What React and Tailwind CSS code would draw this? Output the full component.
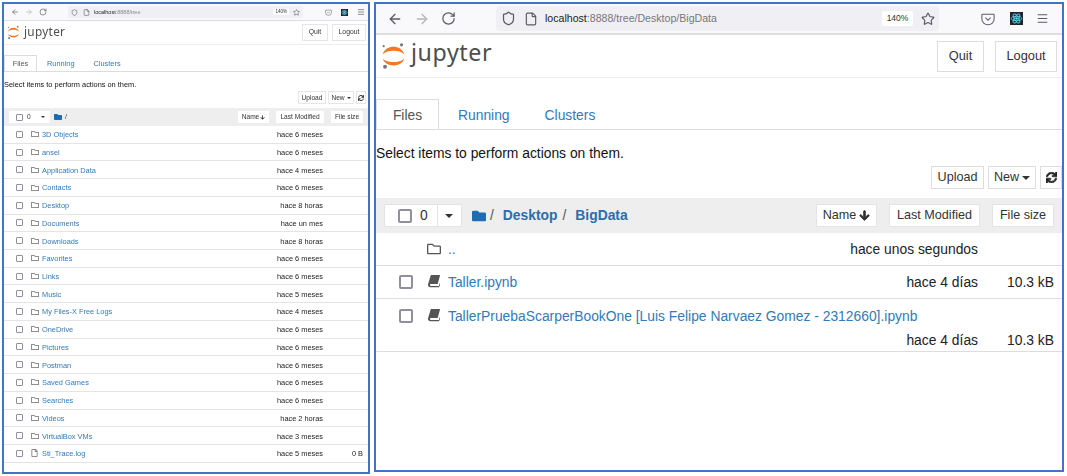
import React from 'react';
import { ArrowLeft, ArrowRight, RotateCw, Shield, File, Star, Menu } from 'lucide-react';
import { FaFolder, FaRegFolder, FaRegFile, FaArrowDown, FaSync } from 'react-icons/fa';

const LEFT_ROWS = [
  ['3D Objects', 'hace 6 meses'],
  ['ansel', 'hace 6 meses'],
  ['Application Data', 'hace 4 meses'],
  ['Contacts', 'hace 6 meses'],
  ['Desktop', 'hace 8 horas'],
  ['Documents', 'hace un mes'],
  ['Downloads', 'hace 8 horas'],
  ['Favorites', 'hace 6 meses'],
  ['Links', 'hace 6 meses'],
  ['Music', 'hace 5 meses'],
  ['My Files-X Free Logs', 'hace 4 meses'],
  ['OneDrive', 'hace 6 meses'],
  ['Pictures', 'hace 6 meses'],
  ['Postman', 'hace 6 meses'],
  ['Saved Games', 'hace 6 meses'],
  ['Searches', 'hace 6 meses'],
  ['Videos', 'hace 2 horas'],
  ['VirtualBox VMs', 'hace 3 meses'],
  ['Sti_Trace.log', 'hace 5 meses', '0 B', 'file'],
];

function JupyterLogo({ className }) {
  return (
    <svg viewBox="0 0 28 30" className={className}>
      <path d="M2 13 C5 2 23 2 26 13 C21 8 7 8 2 13 Z" fill="#f37726" />
      <path d="M2 18 C5 28 23 28 26 18 C21 23 7 23 2 18 Z" fill="#f37726" />
      <circle cx="23" cy="2.5" r="1.8" fill="#767677" />
      <circle cx="3" cy="4" r="1.2" fill="#767677" />
      <circle cx="4.5" cy="27" r="2.2" fill="#767677" />
    </svg>
  );
}

function PocketIcon({ className }) {
  return (
    <svg viewBox="0 0 16 16" fill="none" stroke="#5b5b66" strokeWidth="1.2" className={className}>
      <path d="M2 2.5 H14 Q15 2.5 15 3.5 V8 A7 6.5 0 0 1 1 8 V3.5 Q1 2.5 2 2.5 Z" />
      <path d="M5 6.5 L8 9.5 L11 6.5" />
    </svg>
  );
}

function ReactExt({ className }) {
  return (
    <svg viewBox="0 0 16 16" className={className}>
      <rect width="16" height="16" fill="#20232a" />
      <g fill="none" stroke="#61dafb" strokeWidth="1">
        <ellipse cx="8" cy="8" rx="6.5" ry="2.6" />
        <ellipse cx="8" cy="8" rx="6.5" ry="2.6" transform="rotate(60 8 8)" />
        <ellipse cx="8" cy="8" rx="6.5" ry="2.6" transform="rotate(120 8 8)" />
      </g>
      <circle cx="8" cy="8" r="1.5" fill="#61dafb" />
    </svg>
  );
}

// slanted notebook icon, the fa-book that Jupyter uses
function BookIcon({ className }) {
  return (
    <svg viewBox="0 0 16 16" fill="currentColor" className={className}>
      <path d="M5 1H15L12.2 11.5H4.4C3 11.5 3 13.6 4.4 13.6H13.6L14.8 9.5V13L13.6 15H3.5C1.5 15 .8 13 1.3 11.5L4 2.2C4.2 1.5 4.5 1 5 1Z" />
    </svg>
  );
}

function Caret({ className }) {
  return <span className={`border-x-transparent border-t-current ${className}`} />;
}

function LeftRow({ name, time, size, kind }) {
  return (
    <div className="flex h-[17.73px] items-center border-b border-[#e4e4e4] text-[7.4px]">
      <span className="ml-[12px] h-[7px] w-[7px] rounded-[1px] border border-[#8f8f9d]" />
      <span className="ml-[8px] flex w-[11px] text-[#6b6b6b]">
        {kind === 'file' ? <FaRegFile className="h-[8px] w-[7px]" /> : <FaRegFolder className="h-[8px] w-[8px]" />}
      </span>
      <span className="pt-[1px] text-[#337ab7]">{name}</span>
      <span className="ml-auto pt-[1px] text-[#222]">{time}</span>
      <span className="w-[45px] pr-[5px] pt-[1px] text-right text-[#222]">{size}</span>
    </div>
  );
}

function LeftPanel() {
  return (
    <section className="flex h-[472px] w-[368px] flex-col overflow-hidden border-2 border-[#4472c4] bg-white blur-[0.45px]">
      <div className="flex h-[17px] shrink-0 items-center border-b border-[#ddd] bg-[#f9f9fb] text-[#5b5b66]">
        <ArrowLeft className="ml-[7px] h-[8px] w-[8px]" />
        <ArrowRight className="ml-[6px] h-[8px] w-[8px] text-[#b5b5bb]" />
        <RotateCw className="ml-[6px] h-[8px] w-[8px]" />
        <div className="ml-[21px] flex h-[12px] w-[235px] items-center rounded-[2px] bg-[#f0f0f4] pl-[3px]">
          <Shield className="h-[7px] w-[7px]" />
          <File className="ml-[5px] h-[7px] w-[7px]" />
          <span className="ml-[4px] text-[5.5px] text-[#222]">localhost<span className="text-[#888]">:8888/tree</span></span>
          <span className="ml-auto mr-[4px] bg-white px-[2px] text-[4.5px] text-[#333]">140%</span>
          <Star className="mr-[3px] h-[7px] w-[7px]" />
        </div>
        <PocketIcon className="ml-[22px] h-[7px] w-[7px]" />
        <ReactExt className="ml-[9px] h-[7px] w-[7px]" />
        <Menu className="ml-[9px] h-[8px] w-[8px]" />
      </div>
      <header className="flex h-[24px] shrink-0 items-center border-b border-[#eee] pl-[3px] pr-[2px]">
        <JupyterLogo className="h-[15px] w-[13px]" />
        <span className="ml-[4px] pb-[2px] font-['Noto_Sans',sans-serif] text-[11.8px] leading-none tracking-[0.3px] text-[#4e4e4e]">jupyter</span>
        <button className="ml-auto flex h-[17px] w-[26px] items-center justify-center border border-[#e6e6e6] text-[6.8px] text-[#333]">Quit</button>
        <button className="ml-[4px] flex h-[17px] w-[34px] items-center justify-center border border-[#e6e6e6] text-[6.8px] text-[#333]">Logout</button>
      </header>
      <nav className="mt-[10px] flex h-[17px] shrink-0 border-b border-[#ddd] text-[7.4px]">
        <span className="flex w-[33px] items-center justify-center border border-b-0 border-[#ddd] pt-[1px] text-[#555]">Files</span>
        <span className="ml-[10px] flex items-center pt-[1px] text-[#337ab7]">Running</span>
        <span className="ml-[19px] flex items-center pt-[1px] text-[#337ab7]">Clusters</span>
      </nav>
      <p className="mt-[8px] h-[10px] shrink-0 text-[7.4px] leading-[10px] text-[#111]">Select items to perform actions on them.</p>
      <div className="mt-[1px] flex h-[13px] shrink-0 items-center justify-end gap-[2px] pr-[2px] text-[6.6px] text-[#333]">
        <button className="flex h-[13px] w-[28px] items-center justify-center border border-[#e6e6e6]">Upload</button>
        <button className="flex h-[13px] w-[26px] items-center justify-center gap-[2px] border border-[#e6e6e6]">New <Caret className="border-x-[2px] border-t-[2px]" /></button>
        <button className="flex h-[13px] w-[10px] items-center justify-center border border-[#e6e6e6]"><FaSync className="h-[6px] w-[6px]" /></button>
      </div>
      <div className="mt-[4px] flex h-[18px] shrink-0 items-center bg-[#eee] text-[6.6px] text-[#333]">
        <div className="ml-[5px] flex h-[12px] w-[41px] items-center bg-white">
          <span className="ml-[7px] h-[7px] w-[7px] rounded-[1px] border border-[#8f8f9d]" />
          <span className="ml-[4px]">0</span>
          <Caret className="ml-auto mr-[5px] border-x-[2px] border-t-[2px]" />
        </div>
        <FaFolder className="ml-[4px] h-[8px] w-[8px] text-[#1f6db0]" />
        <span className="ml-[3px]">/</span>
        <button className="ml-auto flex h-[12px] w-[31px] items-center justify-center gap-[1px] bg-white">Name <FaArrowDown className="h-[5px] w-[5px]" /></button>
        <button className="ml-[7px] flex h-[12px] w-[48px] items-center justify-center bg-white">Last Modified</button>
        <button className="ml-[7px] mr-[5px] flex h-[12px] w-[32px] items-center justify-center bg-white">File size</button>
      </div>
      {LEFT_ROWS.map(([name, time, size, kind]) => (
        <LeftRow key={name} name={name} time={time} size={size} kind={kind} />
      ))}
    </section>
  );
}

function RightRow({ name, time, size, kind }) {
  return (
    <div className="flex h-[33px] items-center border-b border-[#ddd] text-[13.85px]">
      {kind === 'up' ? (
        <span className="w-[51px]" />
      ) : (
        <span className="ml-[23px] mr-[14px] h-[14px] w-[14px] rounded-[2px] border-2 border-[#8f8f9d]" />
      )}
      <span className="flex w-[21px] text-[#555]">
        {kind === 'up' ? <FaRegFolder className="h-[14px] w-[14px]" /> : <BookIcon className="-mt-[2px] h-[14px] w-[14px]" />}
      </span>
      <span className="pt-[1px] text-[#337ab7]">{name}</span>
      <span className="ml-auto text-[#222]">{time}</span>
      <span className="w-[84px] pr-[8px] text-right text-[#222]">{size}</span>
    </div>
  );
}

function RightPanel() {
  return (
    <section className="flex h-[470px] w-[690px] flex-col overflow-hidden border-2 border-[#4472c4] bg-white">
      <div className="flex h-[31px] shrink-0 items-center border-b-2 border-[#ddd] bg-[#f9f9fb] text-[#5b5b66]">
        <ArrowLeft className="ml-[11px] h-[16px] w-[16px]" />
        <ArrowRight className="ml-[11px] h-[16px] w-[16px] text-[#b5b5bb]" />
        <RotateCw className="ml-[11px] h-[15px] w-[15px]" />
        <div className="ml-[40px] flex h-[25px] w-[443px] items-center rounded-[4px] bg-[#f0f0f4] pl-[5px]">
          <Shield className="h-[15px] w-[15px]" />
          <File className="ml-[8px] h-[14px] w-[14px]" />
          <span className="ml-[7px] text-[10.6px] text-[#222]">localhost<span className="text-[#777]">:8888/tree/Desktop/BigData</span></span>
          <span className="ml-auto mr-[8px] flex h-[15px] w-[31px] items-center justify-center rounded-[2px] bg-white text-[8.5px] text-[#333]">140%</span>
          <Star className="mr-[4px] h-[14px] w-[14px]" />
        </div>
        <PocketIcon className="ml-[42px] h-[14px] w-[14px]" />
        <ReactExt className="ml-[15px] h-[13px] w-[13px]" />
        <Menu className="ml-[13px] h-[13px] w-[13px]" />
      </div>
      <header className="flex h-[43px] shrink-0 items-center border-b border-[#eee] pl-[5px] pr-[5px]">
        <JupyterLogo className="h-[30px] w-[25px]" />
        <span className="ml-[5px] pb-[6px] font-['Noto_Sans',sans-serif] text-[23.2px] leading-none tracking-[0.6px] text-[#4e4e4e]">jupyter</span>
        <button className="ml-auto flex h-[31px] w-[47px] items-center justify-center border border-[#ddd] text-[12.8px] text-[#333]">Quit</button>
        <button className="ml-[11px] flex h-[31px] w-[62px] items-center justify-center border border-[#ddd] text-[12.8px] text-[#333]">Logout</button>
      </header>
      <nav className="mt-[21px] flex h-[31px] shrink-0 border-b border-[#ddd] text-[13.85px]">
        <span className="flex w-[63px] items-center justify-center border border-b-0 border-[#ddd] pt-[2px] text-[#555]">Files</span>
        <span className="ml-[19px] flex items-center pt-[2px] text-[#337ab7]">Running</span>
        <span className="ml-[35px] flex items-center pt-[2px] text-[#337ab7]">Clusters</span>
      </nav>
      <p className="mt-[13px] h-[20px] shrink-0 text-[13.85px] leading-[20px] text-[#111]">Select items to perform actions on them.</p>
      <div className="mt-[3px] flex h-[23px] shrink-0 items-center justify-end text-[12.6px] text-[#333]">
        <button className="flex h-[23px] w-[53px] items-center justify-center border border-[#ddd]">Upload</button>
        <button className="ml-[4px] flex h-[23px] w-[48px] items-center justify-center gap-[3px] border border-[#ddd]">New <Caret className="border-x-[4px] border-t-[4px]" /></button>
        <button className="ml-[4px] flex h-[23px] w-[22px] items-center justify-center border border-[#ddd] text-[#222]"><FaSync className="h-[11px] w-[11px] stroke-[30px]" /></button>
      </div>
      <div className="mt-[9px] flex h-[35px] shrink-0 items-center bg-[#eee] text-[12.6px] text-[#333]">
        <div className="ml-[8px] flex h-[23px] w-[78px] items-center rounded-[2px] border border-[#e4e4e4] bg-white">
          <span className="ml-[13px] h-[14px] w-[14px] rounded-[2px] border-2 border-[#8f8f9d]" />
          <span className="ml-[8px] text-[13.85px]">0</span>
          <span className="ml-[9px] flex h-full flex-1 items-center justify-center border-l border-[#e4e4e4]"><Caret className="border-x-[4px] border-t-[4px]" /></span>
        </div>
        <FaFolder className="ml-[10px] h-[14px] w-[14px] text-[#1f6db0]" />
        <span className="ml-[4px] text-[13.85px] text-[#555]">/</span>
        <span className="ml-[9px] text-[13.85px] font-bold text-[#2a6ead]">Desktop</span>
        <span className="ml-[5px] text-[13.85px] text-[#555]">/</span>
        <span className="ml-[9px] text-[13.85px] font-bold text-[#2a6ead]">BigData</span>
        <button className="ml-auto flex h-[23px] w-[61px] items-center justify-center gap-[3px] border border-[#e4e4e4] bg-white">Name <FaArrowDown className="h-[11px] w-[11px] stroke-[40px]" /></button>
        <button className="ml-[12px] flex h-[23px] w-[91px] items-center justify-center border border-[#e4e4e4] bg-white">Last Modified</button>
        <button className="ml-[12px] mr-[8px] flex h-[23px] w-[62px] items-center justify-center border border-[#e4e4e4] bg-white">File size</button>
      </div>
      <RightRow name=".." time="hace unos segundos" kind="up" />
      <RightRow name="Taller.ipynb" time="hace 4 días" size="10.3 kB" />
      <div className="h-[53px] border-b border-[#ddd] text-[13.85px]">
        <div className="flex h-[33px] items-center">
          <span className="ml-[23px] mr-[14px] h-[14px] w-[14px] rounded-[2px] border-2 border-[#8f8f9d]" />
          <span className="flex w-[21px] text-[#555]"><BookIcon className="-mt-[2px] h-[14px] w-[14px]" /></span>
          <span className="pt-[1px] text-[#337ab7]">TallerPruebaScarperBookOne [Luis Felipe Narvaez Gomez - 2312660].ipynb</span>
        </div>
        <div className="-mt-[2px] flex justify-end text-[#222]">
          <span>hace 4 días</span>
          <span className="w-[84px] pr-[8px] text-right">10.3 kB</span>
        </div>
      </div>
    </section>
  );
}

export default function App() {
  return (
    <div className="flex h-[476px] w-[1067px] gap-[4px] overflow-hidden bg-white pl-[2px] pt-[2px] font-['Liberation_Sans',Arial,sans-serif]">
      <LeftPanel />
      <RightPanel />
    </div>
  );
}
